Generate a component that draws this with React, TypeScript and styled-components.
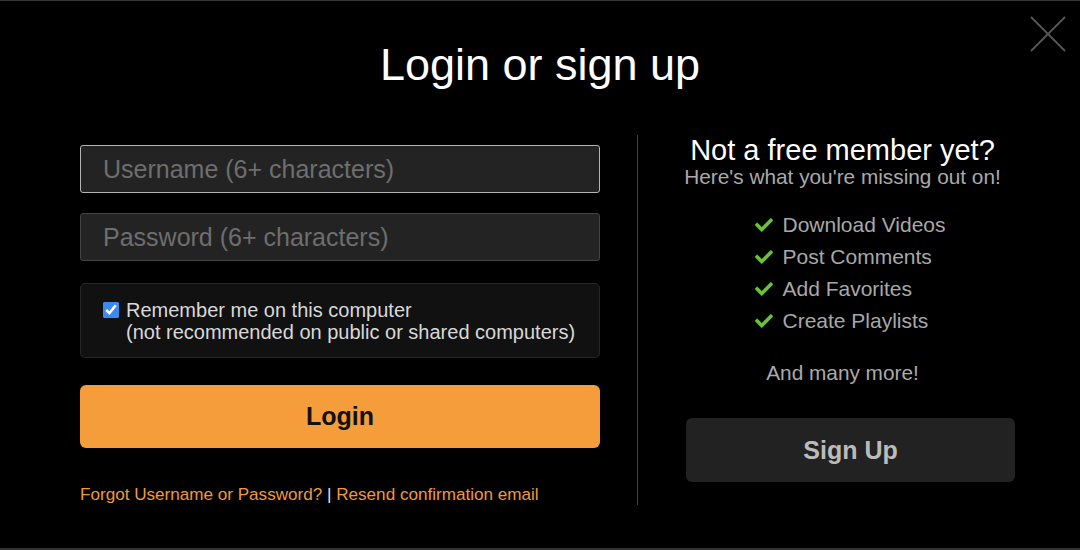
import * as React from 'react';
import styled, { createGlobalStyle } from 'styled-components';
import { FaCheck } from 'react-icons/fa';

const GlobalStyle = createGlobalStyle`
  html, body {
    margin: 0;
    padding: 0;
    background: #000;
  }
  body {
    font-family: "Liberation Sans", Arial, Helvetica, sans-serif;
  }
`

const features = ['Download Videos', 'Post Comments', 'Add Favorites', 'Create Playlists'];

export default function App() {
  return (
    <>
      <GlobalStyle />
      <Modal>
        <CloseButton aria-label='Close'>
          <svg width='36' height='36' viewBox='0 0 36 36'>
            <line x1='1' y1='1' x2='35' y2='35' stroke='#555' strokeWidth='2' />
            <line x1='35' y1='1' x2='1' y2='35' stroke='#555' strokeWidth='2' />
          </svg>
        </CloseButton>
        <Title>Login or sign up</Title>
        <Body>
          <LeftColumn>
            <InputBox type='text' placeholder='Username (6+ characters)' $focused />
            <InputBox type='password' placeholder='Password (6+ characters)' />
            <RememberBox>
              <CheckBox type='checkbox' defaultChecked />
              <RememberText>
                Remember me on this computer
                <br />
                (not recommended on public or shared computers)
              </RememberText>
            </RememberBox>
            <LoginButton>Login</LoginButton>
            <Links>
              <LinkText href='#'>Forgot Username or Password?</LinkText>
              <Pipe> | </Pipe>
              <LinkText href='#'>Resend confirmation email</LinkText>
            </Links>
          </LeftColumn>
          <Divider />
          <RightColumn>
            <SideTitle>Not a free member yet?</SideTitle>
            <SideSubtitle>Here's what you're missing out on!</SideSubtitle>
            <FeatureList>
              {features.map((f) => (
                <FeatureItem key={f}>
                  <CheckIcon><FaCheck /></CheckIcon>
                  {f}
                </FeatureItem>
              ))}
            </FeatureList>
            <MoreText>And many more!</MoreText>
            <SignUpButton>Sign Up</SignUpButton>
          </RightColumn>
        </Body>
      </Modal>
    </>
  )
}

const Modal = styled.div`
  position: relative;
  box-sizing: border-box;
  height: 550px;
  background: #000;
  border-top: 1px solid #333;
  border-bottom: 2px solid #333;
  display: flex;
  flex-direction: column;
`

const CloseButton = styled.button`
  position: absolute;
  top: 15px;
  right: 14px;
  width: 36px;
  height: 36px;
  padding: 0;
  border: none;
  background: transparent;
  cursor: pointer;
  svg {
    display: block;
  }
`

const Title = styled.h1`
  margin: 39px 0 0;
  text-align: center;
  color: #fff;
  font-size: 45px;
  font-weight: normal;
  line-height: 50px;
`

const Body = styled.div`
  display: flex;
  margin-top: 45px;
  padding-left: 80px;
`

const LeftColumn = styled.div`
  width: 520px;
  display: flex;
  flex-direction: column;
  padding-top: 10px;
`

const InputBox = styled.input<{ $focused?: boolean }>`
  box-sizing: border-box;
  height: 48px;
  margin-bottom: 20px;
  padding: 0 22px;
  background: #232323;
  border: 1px solid ${(p) => (p.$focused ? '#b4b4b4' : '#444')};
  border-radius: 3px;
  color: #ddd;
  font-family: "Liberation Sans", Arial, sans-serif;
  font-size: 25px;
  outline: none;

  &::placeholder {
    color: #6e6e6e;
  }
`

const RememberBox = styled.label`
  box-sizing: border-box;
  display: flex;
  align-items: flex-start;
  gap: 7px;
  height: 75px;
  margin-top: 2px;
  padding: 15px 22px;
  background: #111;
  border: 1px solid #262626;
  border-radius: 5px;
`

const CheckBox = styled.input`
  width: 16px;
  height: 16px;
  margin: 3px 0 0;
  accent-color: #3b89f5;
`

const RememberText = styled.span`
  color: #d8d8d8;
  font-size: 20px;
  line-height: 22px;
  white-space: nowrap;
`

const LoginButton = styled.button`
  height: 63px;
  margin-top: 27px;
  border: none;
  border-radius: 6px;
  background: #f49d3a;
  color: #111;
  font-family: "Liberation Sans", Arial, sans-serif;
  font-size: 25px;
  font-weight: bold;
  cursor: pointer;
`

const Links = styled.div`
  margin-top: 37px;
  font-size: 17.1px;
  line-height: 20px;
  white-space: nowrap;
`

const LinkText = styled.a`
  color: #f09a3a;
  text-decoration: none;
`

const Pipe = styled.span`
  color: #e8e8e8;
`

const Divider = styled.div`
  width: 1px;
  height: 370px;
  margin: 0 32px 0 37px;
  background: #444;
`

const RightColumn = styled.div`
  width: 345px;
  display: flex;
  flex-direction: column;
  align-items: center;
`

const SideTitle = styled.h2`
  margin: 0;
  color: #fff;
  font-size: 29px;
  font-weight: normal;
  line-height: 30px;
`

const SideSubtitle = styled.p`
  margin: 0;
  color: #aaa;
  font-size: 20.8px;
  line-height: 24px;
`

const FeatureList = styled.ul`
  list-style: none;
  margin: 20px 0 0;
  padding: 0 0 0 16px;
`

const FeatureItem = styled.li`
  display: flex;
  align-items: center;
  gap: 9px;
  height: 32px;
  color: #a8a8a8;
  font-size: 21px;
`

const CheckIcon = styled.span`
  display: flex;
  color: #6fbf3a;
  font-size: 18px;
`

const MoreText = styled.p`
  margin: 24px 0 0;
  color: #aaa;
  font-size: 20.8px;
  line-height: 24px;
`

const SignUpButton = styled.button`
  align-self: flex-end;
  width: 329px;
  height: 64px;
  margin-top: 33px;
  border: none;
  border-radius: 6px;
  background: #222;
  color: #bbb;
  font-family: "Liberation Sans", Arial, sans-serif;
  font-size: 25px;
  font-weight: bold;
  cursor: pointer;
`
